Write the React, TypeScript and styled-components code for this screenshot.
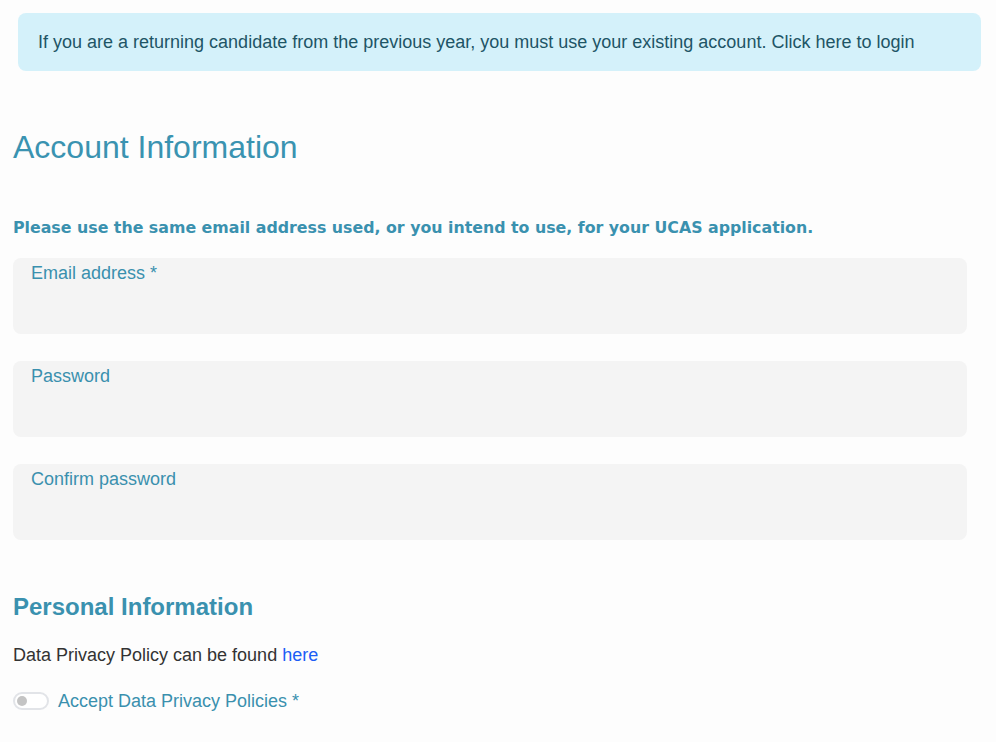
import React from "react";
import styled, { createGlobalStyle } from "styled-components";

const Global = createGlobalStyle`
  html, body { margin: 0; padding: 0; background: #fdfdfd; }
  body { font-family: "Liberation Sans", Arial, sans-serif; }
`;

const Page = styled.div`
  width: 996px;
  height: 742px;
  box-sizing: border-box;
  padding: 13px 29px 0 13px;
  display: flex;
  flex-direction: column;
  overflow: hidden;
`;

const Alert = styled.div`
  margin: 0 -14px 0 5px;
  height: 58px;
  box-sizing: border-box;
  background: #d4f1fa;
  border-radius: 8px;
  padding: 0 20px;
  display: flex;
  align-items: center;
  color: #1e5566;
  font-size: 18px;
`;

const Title = styled.h1`
  margin: 58px 0 0;
  font-size: 32px;
  font-weight: normal;
  color: #3a93b1;
  line-height: 36px;
`;

const Notice = styled.p`
  margin: 53px 0 0;
  font-family: "DejaVu Sans", Verdana, sans-serif;
  font-weight: bold;
  font-size: 15.8px;
  color: #3a91af;
  line-height: 20px;
`;

const Fields = styled.div`
  margin-top: 20px;
  display: flex;
  flex-direction: column;
  gap: 27px;
`;

const Field = styled.div`
  height: 76px;
  box-sizing: border-box;
  background: #f4f4f4;
  border-radius: 8px;
  padding: 5px 18px;
`;

const Label = styled.label`
  display: block;
  font-size: 18px;
  line-height: 20px;
  color: #3a90ae;
`;

const Subtitle = styled.h2`
  margin: 54px 0 0;
  font-size: 24px;
  font-weight: bold;
  color: #3a91af;
  line-height: 26px;
`;

const Text = styled.p`
  margin: 25px 0 0;
  font-size: 18px;
  color: #333333;
  line-height: 20px;
`;

const Link = styled.a`
  color: #1d5ef5;
  text-decoration: none;
`;

const ToggleRow = styled.div`
  margin-top: 26px;
  display: flex;
  align-items: center;
  gap: 9px;
`;

const Toggle = styled.span`
  position: relative;
  width: 36px;
  height: 18px;
  box-sizing: border-box;
  border: 2px solid #e2e4e8;
  border-radius: 9px;
  background: #ffffff;
  &::after {
    content: "";
    position: absolute;
    left: 2px;
    top: 2px;
    width: 10px;
    height: 10px;
    border-radius: 50%;
    background: #c4c4c4;
  }
`;

const ToggleLabel = styled.span`
  font-size: 18px;
  line-height: 20px;
  color: #3a90ae;
`;

export default function App() {
  return (
    <>
      <Global />
      <Page>
        <Alert>
          If you are a returning candidate from the previous year, you must use your existing account. Click here to login
        </Alert>
        <Title>Account Information</Title>
        <Notice>Please use the same email address used, or you intend to use, for your UCAS application.</Notice>
        <Fields>
          <Field><Label>Email address *</Label></Field>
          <Field><Label>Password</Label></Field>
          <Field><Label>Confirm password</Label></Field>
        </Fields>
        <Subtitle>Personal Information</Subtitle>
        <Text>
          Data Privacy Policy can be found <Link href="#">here</Link>
        </Text>
        <ToggleRow>
          <Toggle />
          <ToggleLabel>Accept Data Privacy Policies *</ToggleLabel>
        </ToggleRow>
      </Page>
    </>
  );
}
